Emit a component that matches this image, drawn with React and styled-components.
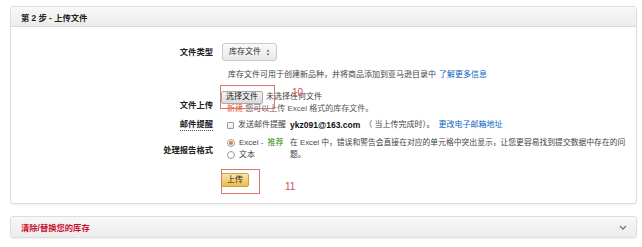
import React from "react";
import styled, { createGlobalStyle } from "styled-components";

const Global = createGlobalStyle`
  html, body { margin: 0; padding: 0; background: #fff; }
  body { font-family: "Liberation Sans", Arial, "Noto Sans CJK SC", sans-serif; color: #333; }
  * { box-sizing: border-box; }
`;

const Page = styled.div`
  padding: 6px 5px 12px 10px;
  display: flex;
  flex-direction: column;
  gap: 12px;
`;

const Panel = styled.section`
  border: 1px solid #dedede;
  border-radius: 3px;
  background: #fff;
  box-shadow: 0 1px 2px rgba(0, 0, 0, 0.06);
  overflow: hidden;
`;

const PanelHead = styled.div`
  height: 20px;
  display: flex;
  align-items: center;
  justify-content: space-between;
  padding: 0 9px 0 10px;
  background: linear-gradient(#f8f8f8, #ececec);
  border-bottom: ${(p) => (p.$open ? "1px solid #d9d9d9" : "none")};
  font-size: 8.3px;
  font-weight: bold;
  color: ${(p) => p.$color || "#222"};
`;

const Body = styled.div`
  padding: 16px 6px 16px 0;
  display: flex;
  flex-direction: column;
`;

const Row = styled.div`
  display: grid;
  grid-template-columns: 202px 1fr;
  column-gap: 8px;
  align-items: center;
  margin-top: ${(p) => p.$mt || 0}px;
`;

const Label = styled.div`
  justify-self: end;
  font-size: 8.3px;
  font-weight: bold;
  color: #222;
  line-height: 11px;
  ${(p) => p.$underline && "border-bottom: 1px dotted #555;"}
  ${(p) => p.$shift && `margin-top: ${p.$shift}px;`}
`;

const Cell = styled.div`
  grid-column: 2;
  position: relative;
  font-size: 8px;
  color: #444;
  line-height: 12px;
  white-space: nowrap;
  display: flex;
  flex-direction: ${(p) => (p.$column ? "column" : "row")};
  align-items: ${(p) => (p.$column ? "flex-start" : "center")};
`;

const Select = styled.div`
  height: 18px;
  margin-left: 1px;
  display: flex;
  align-items: center;
  gap: 5px;
  padding: 0 6px;
  border: 1px solid #c9c9c9;
  border-radius: 3px;
  background: linear-gradient(#fafafa, #e9e9e9);
  color: #333;
  white-space: nowrap;
`;

const Indent = styled.div`
  padding-left: 7px;
`;

const Link = styled.a`
  color: #0a66c2;
  text-decoration: none;
  margin-left: ${(p) => p.$ml || 3}px;
`;

const FileLine = styled.div`
  height: 14px;
  display: flex;
  align-items: center;
  gap: 3px;
`;

const FileButton = styled.div`
  height: 13px;
  padding: 0 4px;
  display: flex;
  align-items: center;
  border: 1px solid #a9a9a9;
  border-radius: 2px;
  background: linear-gradient(#f3f3f3, #dcdcdc);
  color: #222;
`;

const Hint = styled.div`
  line-height: 10px;
  padding-left: 6px;
  color: #555;
`;

const Accent = styled.span`
  color: ${(p) => p.$c};
`;

const Annot = styled.div`
  position: absolute;
  left: ${(p) => p.$l}px;
  top: ${(p) => p.$t}px;
  width: ${(p) => p.$w}px;
  height: ${(p) => p.$h}px;
  border: 1px solid #d97777;
  pointer-events: none;
`;

const AnnotNum = styled.div`
  position: absolute;
  left: ${(p) => p.$l}px;
  top: ${(p) => p.$t}px;
  font-size: 10px;
  color: #d0534a;
  line-height: 10px;
`;

const Check = styled.span`
  width: 7px;
  height: 7px;
  margin: 0 4px 0 6px;
  border: 1px solid #9a9a9a;
  border-radius: 1px;
  background: linear-gradient(#fff, #e8e8e8);
  flex: none;
`;

const Email = styled.b`
  font-size: 8.5px;
  color: #111;
  margin: 0 4px;
`;

const FormatWrap = styled.div`
  display: flex;
  align-items: flex-start;
`;

const Radios = styled.div`
  width: 69px;
  padding-left: 6px;
  display: flex;
  flex-direction: column;
`;

const RadioLine = styled.label`
  display: flex;
  align-items: center;
  gap: 4px;
  height: 12px;
`;

const Radio = styled.span`
  width: 8px;
  height: 8px;
  border-radius: 50%;
  border: 1px solid #9c9c9c;
  background: #fff;
  display: flex;
  align-items: center;
  justify-content: center;
  flex: none;
  &::after {
    content: "";
    width: 4px;
    height: 4px;
    border-radius: 50%;
    background: ${(p) => (p.$on ? "#d9822b" : "transparent")};
  }
`;

const Desc = styled.div`
  font-size: 7.8px;
  white-space: nowrap;
`;

const UploadButton = styled.div`
  height: 14px;
  padding: 0 5px;
  display: flex;
  align-items: center;
  border: 1px solid #c9a23f;
  border-radius: 2px;
  background: linear-gradient(#f8e3ad, #eeba4c);
  color: #222;
`;

const Arrows = () => (
  <svg width="4" height="7" viewBox="0 0 4 7">
    <path d="M2 0.5 L3.6 2.6 H0.4 Z M2 6.5 L3.6 4.4 H0.4 Z" fill="#666" />
  </svg>
);

const Chevron = () => (
  <svg width="8" height="5" viewBox="0 0 8 5">
    <path d="M1 1 L4 4 L7 1" fill="none" stroke="#777" strokeWidth="1.3" />
  </svg>
);

export default function App() {
  return (
    <>
      <Global />
      <Page>
        <Panel>
          <PanelHead $open>第 2 步 - 上传文件</PanelHead>
          <Body>
            <Row>
              <Label>文件类型</Label>
              <Cell>
                <Select>
                  库存文件 <Arrows />
                </Select>
              </Cell>
            </Row>
            <Row $mt={8}>
              <Cell>
                <Indent>
                  库存文件可用于创建新品种，并将商品添加到亚马逊目录中
                  <Link href="#">了解更多信息</Link>
                </Indent>
              </Cell>
            </Row>
            <Row $mt={9}>
              <Label $shift={6}>文件上传</Label>
              <Cell $column>
                <FileLine>
                  <FileButton>选择文件</FileButton>
                  <span>未选择任何文件</span>
                </FileLine>
                <Hint>
                  <Accent $c="#e0561b">新建</Accent> 您可以上传 Excel 格式的库存文件。
                </Hint>
                <Annot $l={-1} $t={-5} $w={55} $h={24} />
                <AnnotNum $l={71} $t={-2}>10</AnnotNum>
              </Cell>
            </Row>
            <Row $mt={5}>
              <Label $underline>邮件提醒</Label>
              <Cell>
                <Check />
                发送邮件提醒
                <Email>ykz091@163.com</Email>
                （ 当上传完成时）。
                <Link href="#" $ml={4}>更改电子邮箱地址</Link>
              </Cell>
            </Row>
            <Row $mt={6}>
              <Label $shift={3}>处理报告格式</Label>
              <Cell>
                <FormatWrap>
                  <Radios>
                    <RadioLine>
                      <Radio $on />
                      Excel - <Accent $c="#2e8b00">推荐</Accent>
                    </RadioLine>
                    <RadioLine>
                      <Radio />
                      文本
                    </RadioLine>
                  </Radios>
                  <Desc>
                    在 Excel 中，错误和警告会直接在对应的单元格中突出显示，让您更容易找到提交数据中存在的问
                    <br />
                    题。
                  </Desc>
                </FormatWrap>
              </Cell>
            </Row>
            <Row $mt={12}>
              <Cell>
                <UploadButton>上传</UploadButton>
                <Annot $l={0} $t={-4} $w={39} $h={25} />
                <AnnotNum $l={64} $t={9}>11</AnnotNum>
              </Cell>
            </Row>
          </Body>
        </Panel>
        <Panel>
          <PanelHead $color="#c8102e">
            清除/替换您的库存
            <Chevron />
          </PanelHead>
        </Panel>
      </Page>
    </>
  );
}
